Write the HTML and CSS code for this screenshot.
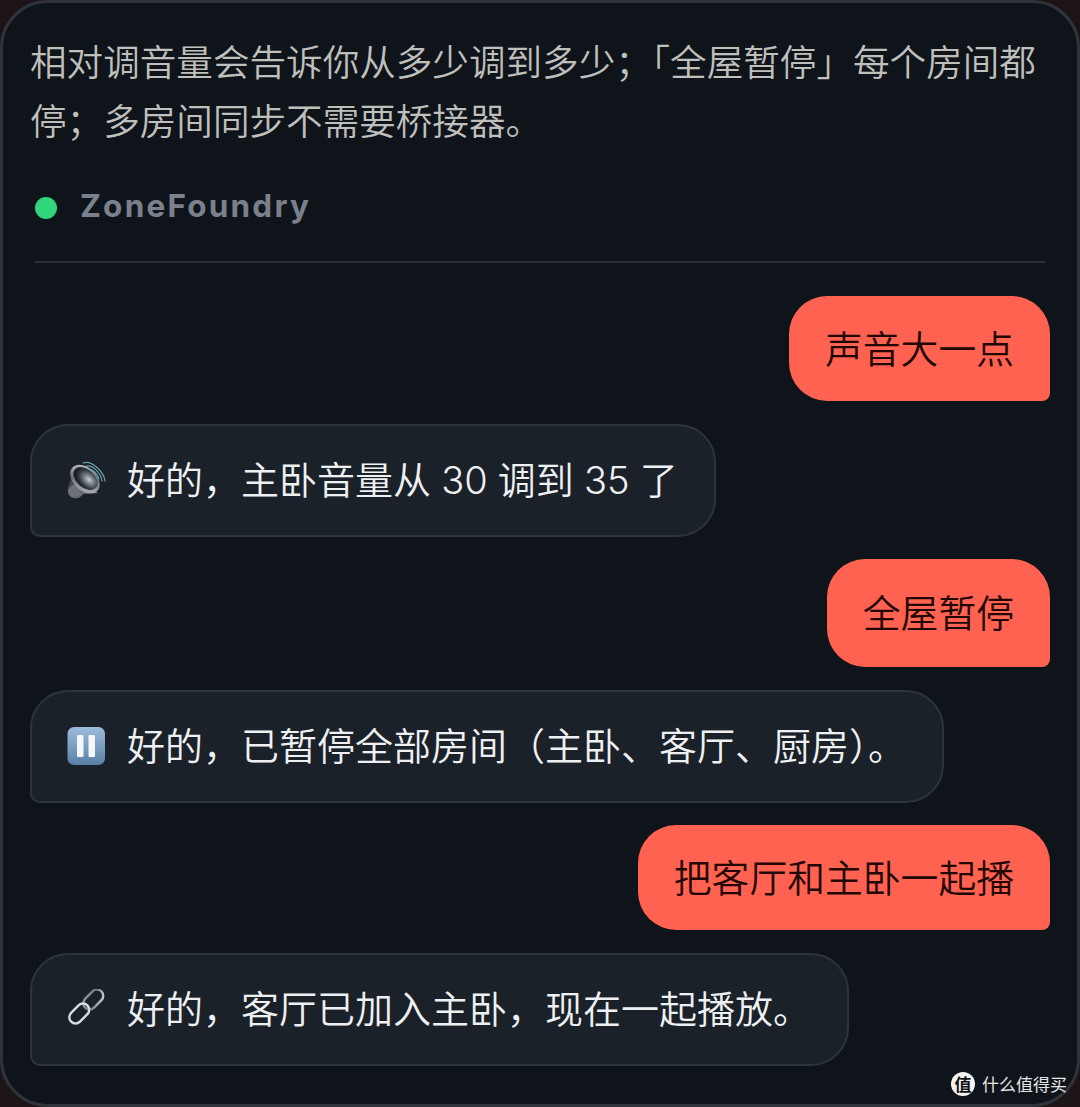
FILE: index.html
```html
<!DOCTYPE html>
<html lang="zh">
<head>
<meta charset="utf-8">
<title>ZoneFoundry</title>
<link rel="stylesheet" href="styles.css">
</head>
<body>
<main class="card">
  <p class="intro">相对调音量会告诉你从多少调到多少；「全屋暂停」每个房间都停；多房间同步不需要桥接器。</p>
  <header class="brand"><span class="dot"></span><span class="brand-name">ZoneFoundry</span></header>
  <hr class="rule">
  <section class="chat">
    <div class="bubble user">声音大一点</div>
    <div class="bubble bot">
      <svg class="emoji" viewBox="0 0 40 40" aria-hidden="true">
        <defs>
          <linearGradient id="metal" x1="0" y1="0" x2="1" y2="1"><stop offset="0" stop-color="#d5d9dc"/><stop offset=".5" stop-color="#6a6e73"/><stop offset="1" stop-color="#c4c8cc"/></linearGradient>
          <linearGradient id="back" x1="0" y1="0" x2="1" y2="1"><stop offset="0" stop-color="#2a2c30"/><stop offset="1" stop-color="#8a8e92"/></linearGradient>
          <radialGradient id="cone" cx=".62" cy=".42" r=".62"><stop offset="0" stop-color="#c6d4de"/><stop offset=".3" stop-color="#7d8890"/><stop offset=".7" stop-color="#303439"/><stop offset="1" stop-color="#141619"/></radialGradient>
        </defs>
        <path d="M6 14 2 28c-1 5 2 9 6 10 4 1 7-1 9-4l15-1z" fill="url(#back)"/>
        <ellipse cx="8.5" cy="31" rx="6" ry="7" transform="rotate(40 8.5 31)" fill="#6d7175"/>
        <ellipse cx="19" cy="19" rx="17" ry="11.5" transform="rotate(42 19 19)" fill="url(#metal)"/>
        <ellipse cx="19.5" cy="18.5" rx="14" ry="9" transform="rotate(42 19.5 18.5)" fill="url(#cone)"/>
        <g fill="none" stroke="#6aa0ad" stroke-width="1.2" stroke-linecap="round">
          <path d="M17 3c9-3 21 9 22 18"/><path d="M20 6c7-1 15 7 16 15"/><path d="M22 9c5 0 10 5 11 10"/>
        </g>
      </svg>
      <span>好的，主卧音量从 30 调到 35 了</span>
    </div>
    <div class="bubble user tall">全屋暂停</div>
    <div class="bubble bot">
      <svg class="emoji" viewBox="0 0 40 40" aria-hidden="true">
        <defs>
          <linearGradient id="tile" x1="0" y1="0" x2="0" y2="1"><stop offset="0" stop-color="#9cbcdc"/><stop offset="1" stop-color="#5a80a4"/></linearGradient>
        </defs>
        <rect x="1.5" y="1" width="37.500" height="38" rx="6.500" fill="url(#tile)"/>
        <rect x="11" y="9" width="6.500" height="22" rx="1" fill="#f5f7fa"/>
        <rect x="22.500" y="9" width="6.500" height="22" rx="1" fill="#f5f7fa"/>
      </svg>
      <span>好的，已暂停全部房间（主卧、客厅、厨房）。</span>
    </div>
    <div class="bubble user">把客厅和主卧一起播</div>
    <div class="bubble bot">
      <svg class="emoji" viewBox="0 0 40 40" aria-hidden="true">
        <defs>
          <linearGradient id="chain" x1="0" y1="1" x2="1" y2="0"><stop offset="0" stop-color="#9aa1a6"/><stop offset=".5" stop-color="#70777b"/><stop offset="1" stop-color="#d3d8dc"/></linearGradient>
        </defs>
        <rect x="21" y="-1" width="12.500" height="23" rx="6.250" transform="rotate(45 27.250 10.500)" fill="none" stroke="url(#chain)" stroke-width="2.400"/>
        <rect x="7" y="13" width="12.500" height="23" rx="6.250" transform="rotate(45 13.250 24.500)" fill="none" stroke="#d5dde2" stroke-width="2.400"/>
      </svg>
      <span>好的，客厅已加入主卧，现在一起播放。</span>
    </div>
  </section>
  <aside class="watermark"><span class="wm-badge">值</span><span>什么值得买</span></aside>
</main>
</body>
</html>
```
FILE: styles.css
```css
* { box-sizing: border-box; }
html, body { margin: 0; height: 1107px; background: #1c1416; overflow: hidden; }
body { font-family: Inter, "Noto Sans CJK SC", sans-serif; }
.card {
  position: relative;
  height: 1107px;
  padding: 28px 30px 0;
  background: #0f141b;
  border: 3px solid #2f343c;
  border-radius: 48px;
}
.card > * { margin-left: -3px; margin-right: -3px; }
.intro {
  margin-top: 0;
  margin-bottom: 0;
  font: 350 36.6px/59px "Noto Sans CJK SC", sans-serif;
  color: #bfbfbb;
}
.brand {
  display: flex;
  align-items: center;
  gap: 23px;
  margin-top: 36px;
  padding-left: 5px;
  height: 42px;
}
.dot { width: 22px; height: 22px; margin-top: 4px; border-radius: 50%; background: #2fd67c; }
.brand-name {
  font: 700 31.500px/42px Inter, "Liberation Sans", sans-serif;
  letter-spacing: 2.200px;
  color: #7b818c;
}
.card > .rule {
  height: 2px;
  border: 0;
  margin: 34px 2px 33px 2px;
  background: #2a2f37;
}
.chat { display: flex; flex-direction: column; gap: 23px; }
.bubble {
  width: fit-content;
  font: 350 37.8px/48px Inter, "Noto Sans CJK SC", sans-serif;
}
.user {
  align-self: flex-end;
  height: 105px;
  padding: 29px 36px;
  background: #ff6250;
  color: #220705;
  border-radius: 38px 38px 8px 38px;
}
.tall { height: 108px; padding-top: 30px; }
.bot {
  display: flex;
  align-items: center;
  gap: 21px;
  height: 113px;
  margin-bottom: -1px;
  padding: 0 36px 2px 34px;
  background: #1b2129;
  border: 2px solid #2e343d;
  border-radius: 38px 38px 38px 10px;
  color: #eef0f2;
  font-size: 38px;
  word-spacing: -0.5px;
}
.emoji { width: 40px; height: 40px; flex: none; }
.watermark {
  position: absolute;
  right: 13px;
  bottom: 8px;
  display: flex;
  align-items: center;
  gap: 7px;
  font: 400 17px/24px "Noto Sans CJK SC", sans-serif;
  color: #e6e6e6;
}
.wm-badge {
  display: flex;
  align-items: center;
  justify-content: center;
  width: 24px;
  height: 24px;
  border-radius: 50%;
  background: #f4f4f4;
  color: #111;
  font-weight: 700;
  font-size: 17px;
}
```
